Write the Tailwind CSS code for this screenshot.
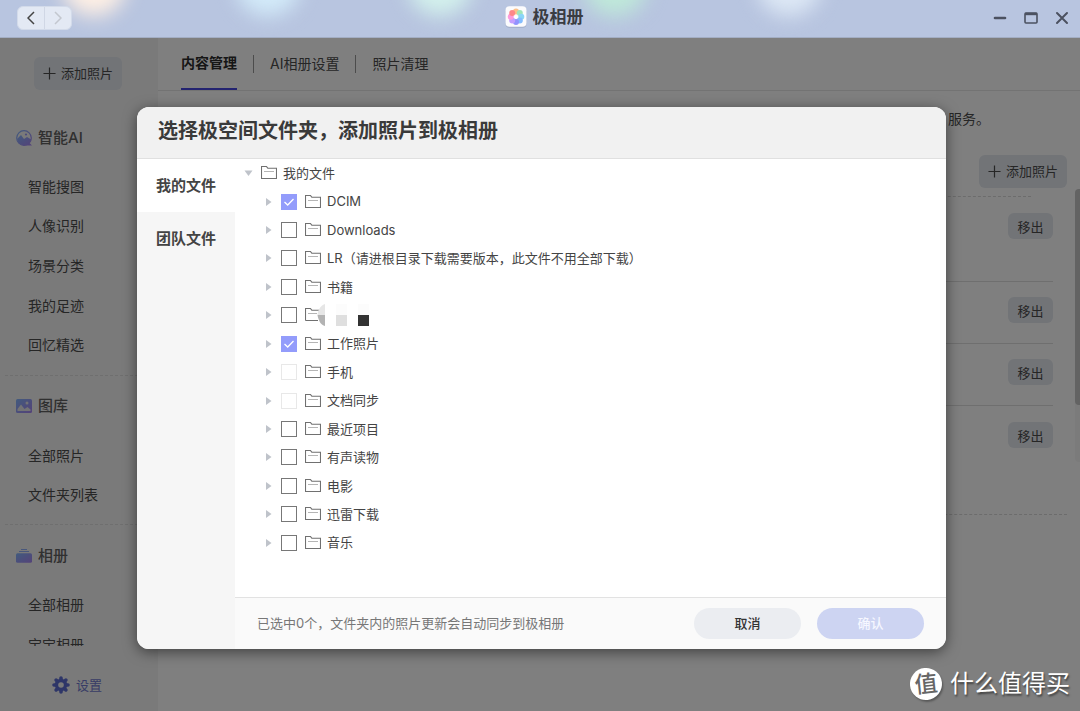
<!DOCTYPE html>
<html lang="zh-CN">
<head>
<meta charset="utf-8">
<meta name="viewport" content="width=device-width, initial-scale=1">
<title>极相册</title>
<script src="https://cdn.jsdelivr.net/npm/@tailwindcss/browser@4"></script>
</head>
<body class="h-screen overflow-hidden flex flex-col bg-white text-[#4c4c4c] text-sm font-['Inter','Noto_Sans_CJK_SC',sans-serif]">
<svg class="absolute w-0 h-0" aria-hidden="true">
  <defs>
    <linearGradient id="violet" x1="0" y1="0" x2="1" y2="1"><stop offset="0" stop-color="#84b6fc"/><stop offset="1" stop-color="#a985f2"/></linearGradient>
    <symbol id="folder" viewBox="0 0 16 14"><path d="M.5 12.5V.5H5.4L6.8 2.2H15.5V12.5Z" fill="none" stroke="#707070" stroke-width="1.1"/><path d="M3 5.5H13" stroke="#b5b5b5"/></symbol>
    <symbol id="plus" viewBox="0 0 14 14"><path d="M7 .5V13.5M.5 7H13.5" stroke="currentColor" stroke-width="1.3" fill="none"/></symbol>
    <symbol id="arrow" viewBox="0 0 6 10"><path d="M0 1L5.5 5L0 9Z" fill="#bfc3ca"/></symbol>
  </defs>
</svg>

<header class="relative shrink-0 h-[38px] overflow-hidden flex items-center justify-between px-[17px] bg-[#b8c5e0] border-b border-[#a3aec4]">
  <div class="absolute -top-12 left-[62px] w-16 h-16 rounded-full bg-[#fff0e4] blur-[10px]"></div>
  <div class="absolute -top-12 left-[236px] w-16 h-16 rounded-full bg-[#d3ebf9] blur-[10px]"></div>
  <div class="absolute -top-12 left-[408px] w-16 h-16 rounded-full bg-[#d3f1ec] blur-[10px]"></div>
  <div class="absolute -top-12 left-[583px] w-16 h-16 rounded-full bg-[#bfe9d9] blur-[10px]"></div>
  <div class="absolute -top-12 left-[757px] w-16 h-16 rounded-full bg-[#dde8f5] blur-[10px]"></div>
  <nav class="relative flex h-6 w-[55px] mb-px rounded-md border border-[#d3dbea] bg-[#e3e9f4] divide-x divide-[#d0d7e5]">
    <button aria-label="后退" class="flex-1 flex items-center justify-center text-[#444]"><svg class="w-2 h-[14px]" viewBox="0 0 8 14" fill="none" stroke="currentColor" stroke-width="1.5"><path d="M7 1L1 7L7 13"/></svg></button>
    <button aria-label="前进" class="flex-1 flex items-center justify-center text-[#c3c7cf]"><svg class="w-2 h-[14px]" viewBox="0 0 8 14" fill="none" stroke="currentColor" stroke-width="1.5"><path d="M1 1L7 7L1 13"/></svg></button>
  </nav>
  <div class="absolute inset-0 flex items-center justify-center gap-[6px] pl-2 pb-1 pointer-events-none">
    <svg class="w-[22px] h-[22px]" viewBox="0 0 22 22">
      <rect x=".5" y="1.2" width="21" height="20.6" rx="4" fill="#8f9bb5" opacity=".6"/><rect x=".5" y=".3" width="21" height="20.4" rx="4" fill="#fbfbfd"/>
      <g opacity=".72"><circle cx="11" cy="5.4" r="3" fill="#ffab5c"/><circle cx="14.8" cy="7" r="3" fill="#7fdc9f"/><circle cx="16.3" cy="10.8" r="3" fill="#5fc9f5"/><circle cx="14.8" cy="14.5" r="3" fill="#57a6ff"/><circle cx="11" cy="16" r="3" fill="#6a6cff"/><circle cx="7.2" cy="14.5" r="3" fill="#b07bff"/><circle cx="5.7" cy="10.8" r="3" fill="#ff77d0"/><circle cx="7.2" cy="7" r="3" fill="#ff5d5d"/></g>
      <circle cx="11" cy="10.8" r="1.6" fill="#fff"/>
    </svg>
    <h1 class="text-[17px] leading-6 font-bold text-[#3a3c42]">极相册</h1>
  </div>
  <div class="relative flex items-center gap-[17px] -mr-[6px] mb-[2px] text-[#4b5160]">
    <button aria-label="最小化"><svg class="w-[14px] h-[14px]" viewBox="0 0 14 14" stroke="currentColor" stroke-width="2.6" stroke-linecap="round"><path d="M2 7H12"/></svg></button>
    <button aria-label="最大化"><svg class="w-[14px] h-[14px]" viewBox="0 0 14 14" fill="none" stroke="currentColor"><rect x="1" y="2" width="12" height="10" rx="1" stroke-width="1.6"/><path d="M1 3H13" stroke-width="2.4"/></svg></button>
    <button aria-label="关闭"><svg class="w-[14px] h-[14px]" viewBox="0 0 14 14" stroke="currentColor" stroke-width="2" stroke-linecap="round"><path d="M2 2L12 12M12 2L2 12"/></svg></button>
  </div>
</header>

<div class="relative flex-1 min-h-0 flex">
  <aside class="w-[158px] shrink-0 flex flex-col bg-[#f5f5f5]">
    <div class="h-[69px] shrink-0 pt-[19px] pl-[34px]">
      <button class="w-[88px] h-[33px] flex items-center justify-center gap-[5px] rounded-md bg-[#e4e8ef] text-[13px]"><svg class="w-[13px] h-[13px]"><use href="#plus"/></svg>添加照片</button>
    </div>
    <div class="flex-1 min-h-0 overflow-hidden">
      <section class="mx-[5px] pb-[10px] border-b border-dashed border-[#dedede]">
        <h2 class="h-[60px] flex items-center gap-[6px] pl-[11px] pt-px text-[15px] font-medium text-[#606060]">
          <svg class="w-4 h-4" viewBox="0 0 16 16"><circle cx="8" cy="8" r="7.3" fill="none" stroke="url(#violet)" stroke-width="1.2"/><path d="M1 9L5 5L8 9L11 7L15.3 9.5A7.5 7.5 0 0 1 13.6 13L16 15.4H8A7.5 7.5 0 0 1 1 9Z" fill="url(#violet)"/><circle cx="10" cy="4.5" r="1.1" fill="#9696f6"/></svg>智能AI</h2>
        <ul class="h-[198px] pl-[23px] flex flex-col"><li class="flex-1 flex items-center"><a href="#">智能搜图</a></li><li class="flex-1 flex items-center"><a href="#">人像识别</a></li><li class="flex-1 flex items-center"><a href="#">场景分类</a></li><li class="flex-1 flex items-center"><a href="#">我的足迹</a></li><li class="flex-1 flex items-center"><a href="#">回忆精选</a></li></ul>
      </section>
      <section class="mx-[5px] pb-[9px] border-b border-dashed border-[#dedede]">
        <h2 class="h-[60px] flex items-center gap-[6px] pl-[11px] text-[15px] font-medium text-[#606060]">
          <svg class="w-4 h-4" viewBox="0 0 16 16"><rect y="1" width="16" height="14" rx="1.5" fill="url(#violet)"/><path d="M1.5 13V11L5 6.5L8.5 11L11.5 9L14.5 11.5V13Z" fill="#e6e6ea"/><circle cx="11" cy="5" r="1.5" fill="#e6e6ea"/></svg>图库</h2>
        <ul class="h-[79px] pl-[23px] flex flex-col"><li class="flex-1 flex items-center"><a href="#">全部照片</a></li><li class="flex-1 flex items-center"><a href="#">文件夹列表</a></li></ul>
      </section>
      <section class="mx-[5px]">
        <h2 class="h-[60px] flex items-center gap-[6px] pl-[11px] pt-px text-[15px] font-medium text-[#606060]">
          <svg class="w-4 h-4" viewBox="0 0 16 16"><path d="M5 1.5H11M3 3.5H13" stroke="#91aef9"/><rect y="5.3" width="16" height="9.5" rx="1.5" fill="url(#violet)"/></svg>相册</h2>
        <ul class="h-[80px] pl-[23px] flex flex-col"><li class="flex-1 flex items-center"><a href="#">全部相册</a></li><li class="flex-1 flex items-center"><a href="#">宝宝相册</a></li></ul>
      </section>
    </div>
    <div class="h-[65px] shrink-0 flex items-center pl-[52px] pt-[13px]">
      <a href="#" class="flex items-center gap-[6px] text-[13px] text-[#7078cc]">
        <svg class="w-[18px] h-[18px]" viewBox="0 0 18 18"><g stroke="#5d6cd0" stroke-width="3.6" stroke-linecap="round"><path d="M9 2V16M2 9H16M4.1 4.1L13.9 13.9M13.9 4.1L4.1 13.9"/></g><circle cx="9" cy="9" r="6.2" fill="#5d6cd0"/><circle cx="9" cy="9" r="2.8" fill="#f3f3f3"/></svg>设置</a>
    </div>
  </aside>

  <main class="flex-1 min-w-0 flex flex-col">
    <nav class="h-[53px] shrink-0 flex items-stretch gap-4 pl-[23px] border-b border-[#e6e6e6]">
      <a href="#" class="flex items-center border-b-2 border-[#4646e0] font-bold text-[#2c2c2c]">内容管理</a>
      <span class="w-px h-[18px] my-[17px] bg-[#999]"></span>
      <a href="#" class="flex items-center">AI相册设置</a>
      <span class="w-px h-[18px] my-[17px] bg-[#999]"></span>
      <a href="#" class="flex items-center">照片清理</a>
    </nav>
    <div class="flex-1 min-h-0 flex">
      <div class="flex-1 min-w-0 flex flex-col pl-[23px] pr-2">
        <p class="h-[64px] shrink-0 pt-[17px] pr-[77px] text-right leading-[22px]">服务。</p>
        <div class="flex justify-end pb-2"><button class="w-[88px] h-[33px] flex items-center justify-center gap-[5px] rounded-md bg-[#e4e8ef] text-[13px]"><svg class="w-[13px] h-[13px]"><use href="#plus"/></svg>添加照片</button></div>
        <div class="mr-9 border-t border-dashed border-[#d8d8d8]"></div>
        <ul class="mr-[14px] flex flex-col text-[13px]">
          <li class="h-[84px] pt-4 flex justify-end items-start"><button class="w-[45px] h-[26px] pt-[3px] rounded-md bg-[#e4e8ef]">移出</button></li>
          <li class="h-[62px] pt-[15px] flex justify-end items-start border-t border-[#dedede]"><button class="w-[45px] h-[26px] pt-[3px] rounded-md bg-[#e4e8ef]">移出</button></li>
          <li class="h-[62px] pt-[15px] flex justify-end items-start border-t border-[#dedede]"><button class="w-[45px] h-[26px] pt-[3px] rounded-md bg-[#e4e8ef]">移出</button></li>
          <li class="h-[109px] pt-4 flex justify-end items-start border-t border-[#dedede]"><button class="w-[45px] h-[26px] pt-[3px] rounded-md bg-[#e4e8ef]">移出</button></li>
        </ul>
        <div class="border-t border-dashed border-[#d8d8d8]"></div>
      </div>
      <div class="w-[5px] mt-[98px] h-[273px] rounded-l bg-[#f7f7f7]"><div class="h-[216px] rounded-l bg-[#c6c6c6]"></div></div>
    </div>
  </main>

  <div class="absolute inset-0 bg-black/50 flex items-start pt-[69px] pl-[137px] pr-[134px]">
    <div role="dialog" aria-labelledby="dlg" class="flex-1 min-w-0 h-[542px] rounded-xl overflow-hidden bg-white flex flex-col shadow-[0_3px_14px_rgba(0,0,0,0.5)] text-[#444]">
      <h2 id="dlg" class="h-[52px] shrink-0 flex items-center px-[21px] pb-[2px] bg-[#f1f1f1] border-b border-[#e0e0e0] text-[20px] font-bold text-[#3a3a3a]">选择极空间文件夹，添加照片到极相册</h2>
      <div class="flex-1 min-h-0 flex">
        <div class="w-[98px] shrink-0 bg-[#f6f6f6] flex flex-col text-[15px] font-bold">
          <button class="h-[53px] bg-white">我的文件</button>
          <button class="h-[53px]">团队文件</button>
        </div>
        <div class="flex-1 min-w-0 flex flex-col">
          <ul class="h-[398px] flex flex-col text-[13px]">
            <li class="flex-1 flex items-center pl-[9px]"><svg class="w-[9px] h-[6px] mr-2" viewBox="0 0 9 6"><path d="M.5 .5H8.5L4.5 6Z" fill="#bfc3ca"/></svg><svg class="w-4 h-[14px] mr-[6px]"><use href="#folder"/></svg>我的文件</li>
            <li class="flex-1 flex items-center pl-[31px]"><svg class="w-[6px] h-[10px] mr-[9px]"><use href="#arrow"/></svg><label class="flex items-center"><input type="checkbox" checked class="appearance-none w-4 h-4 border border-[#777] checked:border-[#939cfb] checked:bg-[#939cfb] mr-2"><svg class="w-4 h-4 -ml-6 mr-2 pointer-events-none z-10" viewBox="0 0 16 16" fill="none" stroke="#fff" stroke-width="1.3"><path d="M3.5 8L6.7 11L12.5 5"/></svg><svg class="w-4 h-[14px] mr-[6px]"><use href="#folder"/></svg>DCIM</label></li>
            <li class="flex-1 flex items-center pl-[31px]"><svg class="w-[6px] h-[10px] mr-[9px]"><use href="#arrow"/></svg><label class="flex items-center"><input type="checkbox" class="appearance-none w-4 h-4 border border-[#777] mr-2"><svg class="w-4 h-[14px] mr-[6px]"><use href="#folder"/></svg>Downloads</label></li>
            <li class="flex-1 flex items-center pl-[31px]"><svg class="w-[6px] h-[10px] mr-[9px]"><use href="#arrow"/></svg><label class="flex items-center"><input type="checkbox" class="appearance-none w-4 h-4 border border-[#777] mr-2"><svg class="w-4 h-[14px] mr-[6px]"><use href="#folder"/></svg>LR（请进根目录下载需要版本，此文件不用全部下载）</label></li>
            <li class="flex-1 flex items-center pl-[31px]"><svg class="w-[6px] h-[10px] mr-[9px]"><use href="#arrow"/></svg><label class="flex items-center"><input type="checkbox" class="appearance-none w-4 h-4 border border-[#777] mr-2"><svg class="w-4 h-[14px] mr-[6px]"><use href="#folder"/></svg>书籍</label></li>
            <li class="flex-1 flex items-center pl-[31px]"><svg class="w-[6px] h-[10px] mr-[9px]"><use href="#arrow"/></svg><input type="checkbox" aria-label="文件夹" class="appearance-none w-4 h-4 border border-[#777] mr-2"><svg class="w-[66px] h-[22px]" viewBox="0 0 66 22"><path d="M.5 16.5V4.5H5.4L6.8 6.2H14M.5 16.5H13" fill="none" stroke="#707070" stroke-width="1.1"/><path d="M3 9.5H12" stroke="#b5b5b5"/><path d="M20 0C15 2 13 6 12.5 11H20Z" fill="#e6e6e6"/><path d="M20 11H12.5C13.5 17 16 21 20 22Z" fill="#b3b3b3"/><path d="M31 0H42V11H31ZM53 0H64V11H53Z" fill="#fcfcfc"/><path d="M31 11H42V22H31Z" fill="#dfdfdf"/><path d="M53 11H64V22H53Z" fill="#333"/></svg></li>
            <li class="flex-1 flex items-center pl-[31px]"><svg class="w-[6px] h-[10px] mr-[9px]"><use href="#arrow"/></svg><label class="flex items-center"><input type="checkbox" checked class="appearance-none w-4 h-4 border border-[#777] checked:border-[#939cfb] checked:bg-[#939cfb] mr-2"><svg class="w-4 h-4 -ml-6 mr-2 pointer-events-none z-10" viewBox="0 0 16 16" fill="none" stroke="#fff" stroke-width="1.3"><path d="M3.5 8L6.7 11L12.5 5"/></svg><svg class="w-4 h-[14px] mr-[6px]"><use href="#folder"/></svg>工作照片</label></li>
            <li class="flex-1 flex items-center pl-[31px]"><svg class="w-[6px] h-[10px] mr-[9px]"><use href="#arrow"/></svg><label class="flex items-center"><input type="checkbox" disabled class="appearance-none w-4 h-4 border border-[#e8e8e8] mr-2"><svg class="w-4 h-[14px] mr-[6px]"><use href="#folder"/></svg>手机</label></li>
            <li class="flex-1 flex items-center pl-[31px]"><svg class="w-[6px] h-[10px] mr-[9px]"><use href="#arrow"/></svg><label class="flex items-center"><input type="checkbox" disabled class="appearance-none w-4 h-4 border border-[#e8e8e8] mr-2"><svg class="w-4 h-[14px] mr-[6px]"><use href="#folder"/></svg>文档同步</label></li>
            <li class="flex-1 flex items-center pl-[31px]"><svg class="w-[6px] h-[10px] mr-[9px]"><use href="#arrow"/></svg><label class="flex items-center"><input type="checkbox" class="appearance-none w-4 h-4 border border-[#777] mr-2"><svg class="w-4 h-[14px] mr-[6px]"><use href="#folder"/></svg>最近项目</label></li>
            <li class="flex-1 flex items-center pl-[31px]"><svg class="w-[6px] h-[10px] mr-[9px]"><use href="#arrow"/></svg><label class="flex items-center"><input type="checkbox" class="appearance-none w-4 h-4 border border-[#777] mr-2"><svg class="w-4 h-[14px] mr-[6px]"><use href="#folder"/></svg>有声读物</label></li>
            <li class="flex-1 flex items-center pl-[31px]"><svg class="w-[6px] h-[10px] mr-[9px]"><use href="#arrow"/></svg><label class="flex items-center"><input type="checkbox" class="appearance-none w-4 h-4 border border-[#777] mr-2"><svg class="w-4 h-[14px] mr-[6px]"><use href="#folder"/></svg>电影</label></li>
            <li class="flex-1 flex items-center pl-[31px]"><svg class="w-[6px] h-[10px] mr-[9px]"><use href="#arrow"/></svg><label class="flex items-center"><input type="checkbox" class="appearance-none w-4 h-4 border border-[#777] mr-2"><svg class="w-4 h-[14px] mr-[6px]"><use href="#folder"/></svg>迅雷下载</label></li>
            <li class="flex-1 flex items-center pl-[31px]"><svg class="w-[6px] h-[10px] mr-[9px]"><use href="#arrow"/></svg><label class="flex items-center"><input type="checkbox" class="appearance-none w-4 h-4 border border-[#777] mr-2"><svg class="w-4 h-[14px] mr-[6px]"><use href="#folder"/></svg>音乐</label></li>
          </ul>
          <footer class="mt-auto h-[52px] flex items-center gap-4 px-[22px] bg-[#fafafa] border-t border-[#e2e2e2] text-[13px]">
            <p class="flex-1 text-[#777]">已选中0个，文件夹内的照片更新会自动同步到极相册</p>
            <button class="w-[107px] h-[31px] rounded-full bg-[#ebedf1] font-medium text-[#333]">取消</button>
            <button class="w-[107px] h-[31px] rounded-full bg-[#cdd4f2] font-medium text-[#f6f7ff]">确认</button>
          </footer>
        </div>
      </div>
    </div>
  </div>

  <div class="absolute right-[10px] bottom-[9px] flex items-center gap-2 text-white">
    <span class="w-8 h-8 rounded-full bg-white flex items-center justify-center text-[23px] leading-8 font-medium text-[#666] -rotate-6 shadow-[1px_2px_2px_rgba(0,0,0,0.3)]">值</span>
    <span class="text-[24px] leading-9 [text-shadow:1px_2px_2px_rgba(0,0,0,0.5)]">什么值得买</span>
  </div>
</div>
</body>
</html>
